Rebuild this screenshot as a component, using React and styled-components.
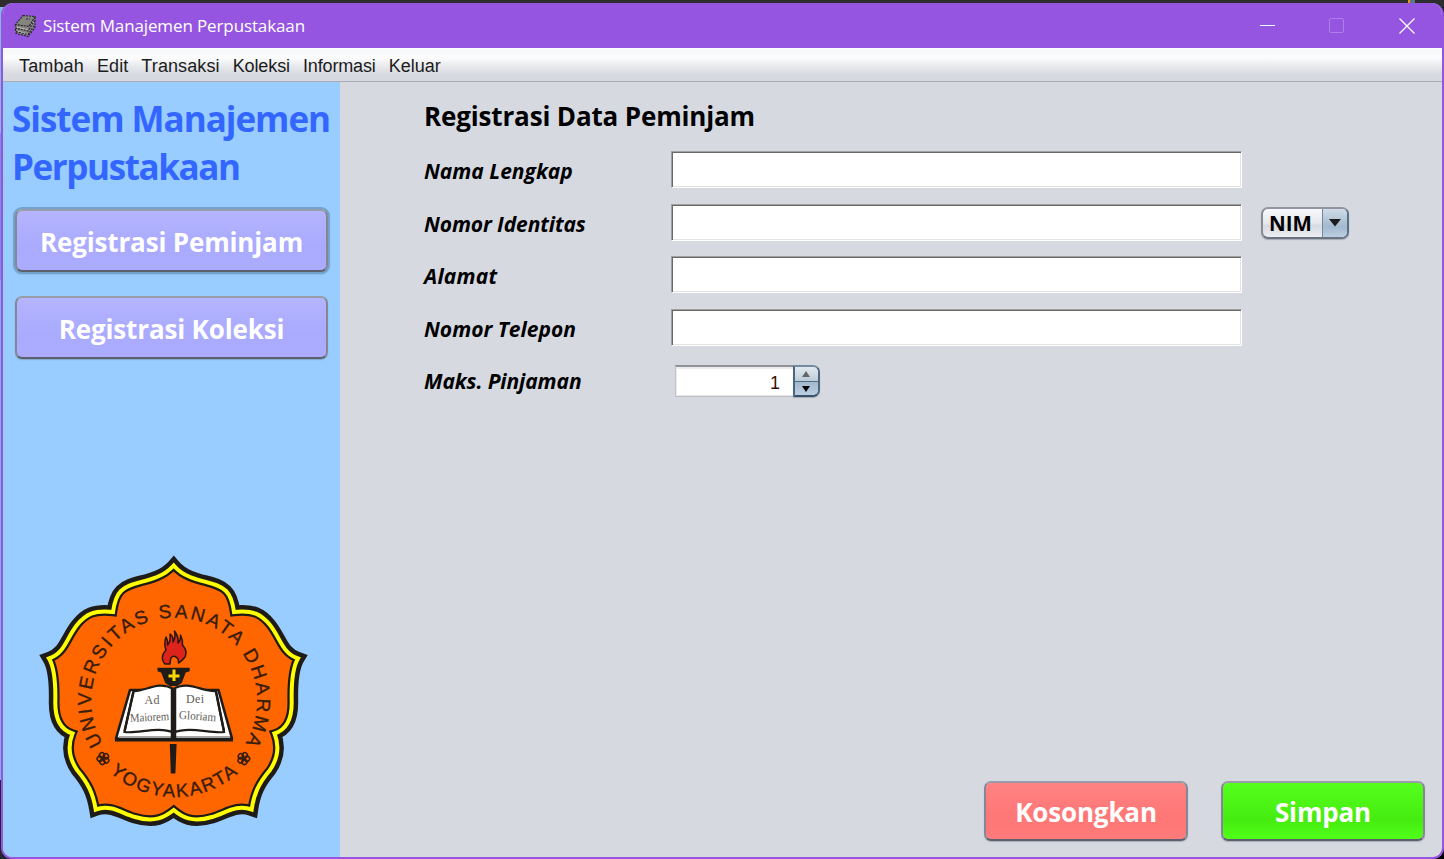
import React from "react";
import styled, { createGlobalStyle } from "styled-components";

const ui = `"Open Sans", "Noto Sans", sans-serif`;
const swing = `"Liberation Sans", Arial, sans-serif`;

const Global = createGlobalStyle`
  *, *::before, *::after { box-sizing: border-box; }
  body { margin: 0; background: #2b2b2b; overflow: hidden; }
  button, input { font: inherit; margin: 0; }
`;

const Desktop = styled.div`
  width: 1444px;
  height: 859px;
  padding: 3px 0 0 1px;
  background:
    linear-gradient(#e8960c, #e8960c) 1408px 0 / 2px 3px no-repeat,
    linear-gradient(#60758a, #60758a) 1410px 0 / 5px 3px no-repeat,
    linear-gradient(#2d2d2d, #2d2d2d) 0 0 / 1444px 7px no-repeat,
    linear-gradient(#000, #000) 1420px 840px / 24px 19px no-repeat,
    linear-gradient(#1e1e1e, #1e1e1e) 1420px 0 / 24px 20px no-repeat,
    linear-gradient(#86b8e6 0 133px, #7a8fdd 133px 280px, #7fb2e8 280px 780px, #23262e 780px);
`;

const Window = styled.div`
  display: flex;
  flex-direction: column;
  width: 1443px;
  height: 856px;
  border: 2px solid #9555e0;
  border-top: 0;
  border-radius: 12px 12px 11px 11px;
  overflow: hidden;
  background: #d6d9e0;
`;

const TitleBar = styled.header`
  display: flex;
  align-items: center;
  flex: none;
  height: 45px;
  padding: 0 27px 0 11px;
  background: #9555e0;
  color: #fff;
`;

const WindowTitle = styled.span`
  flex: 1;
  margin-left: 6px;
  font: 400 17px/24px ${ui};
  letter-spacing: -0.12px;
`;

const Controls = styled.div`
  display: flex;
  gap: 54px;

  svg:last-child {
    margin-left: 1px;
  }
`;

const MenuBar = styled.nav`
  display: flex;
  align-items: center;
  flex: none;
  gap: 13px;
  height: 34px;
  padding: 3px 0 0 16px;
  border-bottom: 1px solid #a9adb5;
  background: linear-gradient(#fff 0, #f6f7f8 2px, #fcfcfc 10px, #eceef0 16px, #d8dae1 26px, #d6d9e0 100%);
  color: #1c1c1c;
  font: 400 18px/22px ${swing};
`;

const MenuItem = styled.span`
  letter-spacing: ${(p) => p.$track || 0}px;
`;

const Body = styled.div`
  display: flex;
  flex: 1;
  min-height: 0;
`;

const Sidebar = styled.aside`
  display: flex;
  flex-direction: column;
  width: 337px;
  padding: 13px 9px 28px 9px;
  background: #99ccff;
`;

const Brand = styled.h1`
  margin: 0 0 18px;
  color: #3366ff;
  font: 700 35px/48px ${ui};
  white-space: nowrap;
`;

const BrandLine = styled.span`
  display: block;
  letter-spacing: ${(p) => p.$track}px;
`;

const tones = {
  violet: "linear-gradient(#b4b4ff 0, #aaaaff 60%, #ababff 100%)",
  red: "linear-gradient(#ff8282 0, #ff7777 60%, #ff7a7a 100%)",
  green: "linear-gradient(#55ff1c 0, #46ec10 66%, #50ff18 100%)",
};

const Button = styled.button`
  display: flex;
  align-items: center;
  justify-content: center;
  width: ${(p) => p.$w}px;
  height: ${(p) => p.$h}px;
  padding: ${(p) => p.$drop}px 0 0;
  border: 2px solid;
  border-color: #999ba6 #858794 #5d606c;
  border-radius: 7px;
  background: ${(p) => tones[p.$tone]} padding-box;
  box-shadow: ${(p) => (p.$focused ? "0 0 0 2px #73a3cc, 0 1px 2px 1px #6c98c0" : "0 1px 1px rgba(90, 100, 120, 0.35)")};
  color: #fff;
  font: 700 26px/36px ${ui};
  letter-spacing: -0.15px;
  white-space: nowrap;
`;

const SideButtons = styled.div`
  display: flex;
  flex-direction: column;
  gap: 24px;
  padding-left: 3px;
`;

const Crest = styled.svg`
  display: block;
  margin: auto 0 0 23px;
`;

const Main = styled.main`
  display: flex;
  flex: 1;
  flex-direction: column;
  padding: 16px 17px 16px 84px;
`;

const Heading = styled.h2`
  margin: 0 0 17px;
  color: #000;
  font: 700 26px/36px ${ui};
  letter-spacing: -0.15px;
`;

const Form = styled.form`
  display: flex;
  flex-direction: column;
  gap: 15.6px;
`;

const Row = styled.div`
  display: flex;
  align-items: flex-start;
  height: 37px;
`;

const Label = styled.label`
  width: 247px;
  padding-top: 5px;
  color: #000;
  font: italic 700 21px/30px ${ui};
  letter-spacing: ${(p) => p.$track || 0}px;
`;

const Field = styled.input`
  width: 571px;
  height: 37px;
  padding: 0 6px;
  border: 1px solid;
  border-color: #a0a0a0 #fff #fff #a0a0a0;
  border-radius: 0;
  outline: 0;
  background: #fff;
  box-shadow: inset 1px 1px #696969, inset -1px -1px #e3e3e3;
`;

const Combo = styled.div`
  display: flex;
  width: 88px;
  height: 32px;
  margin: 3px 0 0 19px;
  border: 2px solid;
  border-color: #9196a0 #587087 #6b7480 #878b95;
  border-radius: 7px;
  overflow: hidden;
  background: linear-gradient(#f7f8fa, #e6e8ed 50%, #d7dae2 60%, #eceef2);
  box-shadow: 0 1px 1px rgba(90, 100, 120, 0.4);
`;

const ComboValue = styled.span`
  flex: 1;
  padding-left: 6px;
  color: #000;
  font: 700 20.5px/29px ${ui};
`;

const ComboArrow = styled.span`
  display: flex;
  align-items: center;
  justify-content: center;
  width: 25px;
  border-left: 1px solid #70879d;
  background: linear-gradient(#d0dce8, #a8bdd1 55%, #a3b9cf 65%, #bdd0e2);
`;

const Spinner = styled.div`
  display: flex;
  width: 145px;
  height: 32px;
  margin: 4px 0 0 4px;
`;

const SpinnerValue = styled.span`
  flex: 1;
  padding-right: 13px;
  border: 1px solid #bfc1c7;
  border-top: 2px solid #929398;
  border-right: 0;
  background: #fff;
  box-shadow: inset 1px 2px #ececee, inset 0 -1px #e3e4e7;
  color: #3a1000;
  font: 400 18px/32px ${swing};
  text-align: right;
`;

const SpinnerButtons = styled.div`
  display: flex;
  flex-direction: column;
  width: 27px;
  border: 2px solid;
  border-color: #738ba0 #4c647c #38506a #4c647c;
  border-radius: 0 7px 7px 0;
  overflow: hidden;
  box-shadow: 0 1px 1px rgba(90, 100, 120, 0.4);
`;

const Step = styled.span`
  display: flex;
  flex: 1;
  align-items: center;
  justify-content: center;
  padding-right: 1px;
  background: ${(p) => (p.$down ? "linear-gradient(#a3b8cd, #bbcfe2)" : "linear-gradient(#e2e9f0, #bccbd9)")};
  border-top: ${(p) => (p.$down ? "1px solid #536d87" : "0")};
`;

const Actions = styled.footer`
  display: flex;
  justify-content: flex-end;
  gap: 33px;
  margin-top: auto;
`;

function BooksIcon() {
  return (
    <svg width="23" height="24" viewBox="0 0 23 24">
      <path d="M9 1.500 21 2 20.500 13 14 22 1.5 19 1 11Z" fill="#85857f" />
      <path d="M3 13 14 16 M3 17l11 3M16 13.500l4-6M16 17.500l4-5" stroke="#c0c0c0" strokeWidth="1" />
      <g fill="none" stroke="#2b2633" strokeWidth="1.2" strokeDasharray="2 1">
        <path d="M9 1.5 21 2.5 15 12.500 1.5 10.500 9 1.5M1.5 10.500v3.500L14 17l7-11M1.500 15v2.500L14 20.500l7-10M2 18.500v1l12 3 7-9V3M12 5h4" />
      </g>
    </svg>
  );
}

const OUTLINE =
  "M173.7 565.5 Q180 573 190 577 C205 583 218 583 226 591 Q232 597 234 612 C253 610 261 614 270 625 C281 639 282 653 298 658.5 Q291 670 291.7 702 Q292 728 274.5 733.5 Q282 752 270 770 C259 783 254 793 251.7 809.5 C236 804 226 813 212 817 C192 823 182 817 173.7 810 C165 817 155 823 135 817 C121 813 111 804 95.7 809.5 C93 793 88 783 77 770 Q65 752 72.5 733.5 Q55 728 55.3 702 Q56 670 49 658.5 C65 653 66 639 77 625 C86 614 94 610 113 612 Q115 597 121 591 C129 583 142 583 157 577 Q167 573 173.7 565.5Z";

const Rosette = ({ x, y, r }) => (
  <g transform={`translate(${x} ${y}) rotate(${r})`} fill="none" stroke="#381c0c" strokeWidth="1.5">
    <circle cx="0" cy="-3.4" r="2.6" />
    <circle cx="3.3" cy="-1" r="2.6" />
    <circle cx="2" cy="2.9" r="2.6" />
    <circle cx="-2" cy="2.9" r="2.6" />
    <circle cx="-3.3" cy="-1" r="2.6" />
  </g>
);

function UniversityCrest() {
  return (
    <Crest width="278" height="275" viewBox="35 554 278 275">
      <g strokeLinejoin="miter" strokeMiterlimit="6">
        <path d={OUTLINE} fill="none" stroke="#1f1b18" strokeWidth="13" />
        <path d={OUTLINE} fill="#ff6600" stroke="#1f1b18" strokeWidth="8.5" />
        <path d={OUTLINE} fill="none" stroke="#ffff00" strokeWidth="4" />
      </g>
      <path id="arcTop" d="M103 743.5 A83 83 0 1 1 243.3 746.5" fill="none" />
      <path id="arcBottom" d="M109.6 772.1 A97 97 0 0 0 239.4 772.1" fill="none" />
      <g fill="#381c0c" stroke="#381c0c" strokeWidth=".35" fontFamily="Liberation Sans, Arial, sans-serif">
        <text fontSize="19" textLength="350" lengthAdjust="spacing">
          <textPath href="#arcTop" textLength="350" lengthAdjust="spacing">UNIVERSITAS SANATA DHARMA</textPath>
        </text>
        <text fontSize="18.5" textLength="140" lengthAdjust="spacing">
          <textPath href="#arcBottom" textLength="140" lengthAdjust="spacing">YOGYAKARTA</textPath>
        </text>
      </g>
      <Rosette x={103.3} y={758.5} r={50} />
      <Rosette x={243.5} y={758.5} r={-50} />
      <path
        d="M165 664 C160 659 163 653 166 650 C164 645 165 640 166 637 Q168 640 167.5 645 Q171 641 170 634 Q174 637 173 642 Q176 637 174.5 631 Q179 637 178 643 Q181 640 180.5 635 Q183 640 182.5 645 Q188 651 185 657 Q182 661 178.5 663 Q179 658 175 656.5 Q170 655 170 664Z"
        fill="#dc241c" stroke="#2a1610" strokeWidth="1.5" strokeLinejoin="round"
      />
      <path d="M157.5 667.7h32.2v3.5l-4 1.3-4 10.5-4.5 3h-7.5l-4.5-3-4-10.5-3.7-1.3Z" fill="#1f1b18" />
      <path d="M174 669.5v11.5M168.5 676h11" stroke="#f7d800" strokeWidth="3" />
      <path d="M130 690 116 738.5H232L218.5 690 Z" fill="#fff" stroke="#1f1b18" strokeWidth="2.6" strokeLinejoin="round" />
      <path d="M119 737H230" stroke="#a5a5a5" strokeWidth="2" />
      <path d="M115 740.3H233" stroke="#1f1b18" strokeWidth="2.6" />
      <path
        d="M133.5 691 C145 692 158 680 173.5 689 C188 680 202 692 216 691 L224 732 C211 734 190 726 173.5 732.5 C158 726 138 734 124.5 732Z"
        fill="#fff" stroke="#1f1b18" strokeWidth="2.2"
      />
      <path d="M133.5 692 124.5 731M216 692l8 39" stroke="#1f1b18" strokeWidth="2.4" />
      <path d="M173.5 689v51.5" stroke="#1f1b18" strokeWidth="5.5" />
      <path d="M169.8 744h6.8l-1.2 29.5h-4.6Z" fill="#1f1b18" />
      <g fill="#5f5b58" fontFamily="Liberation Serif, Times New Roman, serif" fontSize="12">
        <text x="144.5" y="703.5" textLength="15">Ad</text>
        <text x="186" y="702.5" textLength="18">Dei</text>
        <text x="130" y="721" textLength="39" lengthAdjust="spacingAndGlyphs" transform="rotate(-3 150 717)">Maiorem</text>
        <text x="179" y="720" textLength="37" lengthAdjust="spacingAndGlyphs" transform="rotate(4 198 717)">Gloriam</text>
      </g>
    </Crest>
  );
}

const menu = [
  ["Tambah", 0.15],
  ["Edit", 0.1],
  ["Transaksi", 0.1],
  ["Koleksi", -0.1],
  ["Informasi", -0.15],
  ["Keluar", 0],
];

export default function App() {
  return (
    <Desktop>
      <Global />
      <Window>
        <TitleBar>
          <BooksIcon />
          <WindowTitle>Sistem Manajemen Perpustakaan</WindowTitle>
          <Controls>
            <svg width="15" height="15"><path d="M0 7.5h15" stroke="#fff" /></svg>
            <svg width="15" height="15"><rect x=".5" y=".5" width="14" height="14" rx="1.5" fill="none" stroke="#b07ee9" /></svg>
            <svg width="16" height="16"><path d="M.5.5l15 15M15.5.5l-15 15" stroke="#fff" strokeWidth="1.3" /></svg>
          </Controls>
        </TitleBar>
        <MenuBar>
          {menu.map(([name, track]) => <MenuItem key={name} $track={track}>{name}</MenuItem>)}
        </MenuBar>
        <Body>
          <Sidebar>
            <Brand>
              <BrandLine $track={-1.02}>Sistem Manajemen</BrandLine>
              <BrandLine $track={-1.4}>Perpustakaan</BrandLine>
            </Brand>
            <SideButtons>
              <Button $tone="violet" $w={313} $h={63} $drop={3} $focused>Registrasi Peminjam</Button>
              <Button $tone="violet" $w={313} $h={63} $drop={3}>Registrasi Koleksi</Button>
            </SideButtons>
            <UniversityCrest />
          </Sidebar>
          <Main>
            <Heading>Registrasi Data Peminjam</Heading>
            <Form>
              <Row><Label>Nama Lengkap</Label><Field /></Row>
              <Row>
                <Label $track={-0.1}>Nomor Identitas</Label>
                <Field />
                <Combo>
                  <ComboValue>NIM</ComboValue>
                  <ComboArrow>
                    <svg width="12" height="8"><path d="M0 0h12L6 7.5Z" fill="#1c1c1c" /></svg>
                  </ComboArrow>
                </Combo>
              </Row>
              <Row><Label $track={0.2}>Alamat</Label><Field /></Row>
              <Row><Label>Nomor Telepon</Label><Field /></Row>
              <Row>
                <Label $track={-0.1}>Maks. Pinjaman</Label>
                <Spinner>
                  <SpinnerValue>1</SpinnerValue>
                  <SpinnerButtons>
                    <Step><svg width="8" height="6"><path d="M0 6h8L4 0Z" fill="#666" /></svg></Step>
                    <Step $down><svg width="8" height="6"><path d="M0 0h8L4 6Z" fill="#000" /></svg></Step>
                  </SpinnerButtons>
                </Spinner>
              </Row>
            </Form>
            <Actions>
              <Button type="button" $tone="red" $w={204} $h={60} $drop={1}>Kosongkan</Button>
              <Button type="button" $tone="green" $w={204} $h={60} $drop={1}>Simpan</Button>
            </Actions>
          </Main>
        </Body>
      </Window>
    </Desktop>
  );
}
